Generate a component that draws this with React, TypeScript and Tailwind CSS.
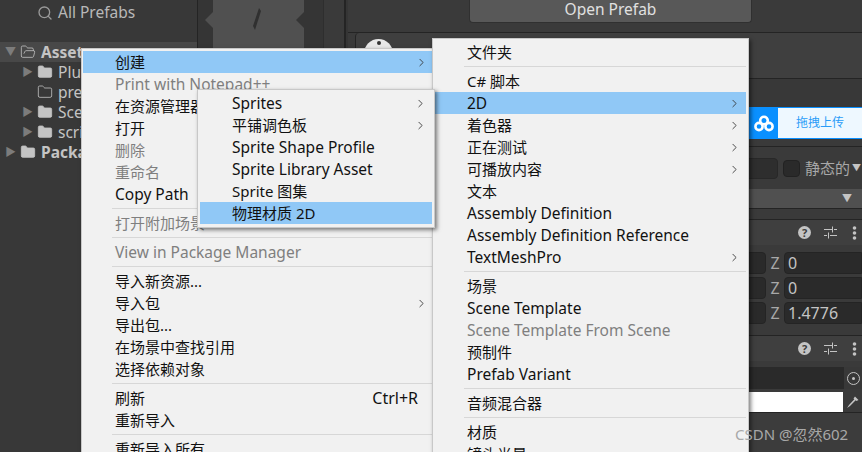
import React from "react";
import { ChevronRight, Folder, FolderOpen, Search } from "lucide-react";

const font = "font-['Noto_Sans','Noto_Sans_CJK_SC',sans-serif]";

type Item =
  | { sep: true }
  | { label: string; muted?: boolean; active?: boolean; arrow?: boolean; shortcut?: string };

const s: Item = { sep: true };

const assetsMenu: Item[] = [
  { label: "创建", active: true, arrow: true },
  { label: "Print with Notepad++", muted: true },
  { label: "在资源管理器中显示" },
  { label: "打开" },
  { label: "删除", muted: true },
  { label: "重命名", muted: true },
  { label: "Copy Path" },
  s,
  { label: "打开附加场景", muted: true },
  s,
  { label: "View in Package Manager", muted: true },
  s,
  { label: "导入新资源..." },
  { label: "导入包", arrow: true },
  { label: "导出包..." },
  { label: "在场景中查找引用" },
  { label: "选择依赖对象" },
  s,
  { label: "刷新", shortcut: "Ctrl+R" },
  { label: "重新导入" },
  s,
  { label: "重新导入所有" },
];

const spriteMenu: Item[] = [
  { label: "Sprites", arrow: true },
  { label: "平铺调色板", arrow: true },
  { label: "Sprite Shape Profile" },
  { label: "Sprite Library Asset" },
  { label: "Sprite 图集" },
  { label: "物理材质 2D", active: true },
];

const createMenu: Item[] = [
  { label: "文件夹" },
  s,
  { label: "C# 脚本" },
  { label: "2D", active: true, arrow: true },
  { label: "着色器", arrow: true },
  { label: "正在测试", arrow: true },
  { label: "可播放内容", arrow: true },
  { label: "文本" },
  { label: "Assembly Definition" },
  { label: "Assembly Definition Reference" },
  { label: "TextMeshPro", arrow: true },
  s,
  { label: "场景" },
  { label: "Scene Template" },
  { label: "Scene Template From Scene", muted: true },
  { label: "预制件" },
  { label: "Prefab Variant" },
  s,
  { label: "音频混合器" },
  s,
  { label: "材质" },
  { label: "镜头光晕" },
];

// latin labels run a little wider than the cjk ones in the reference
const isLatin = (t: string) => /^[\x20-\x7e]+$/.test(t);

const MenuList = ({ items, textPad, sepPad }: { items: Item[]; textPad: string; sepPad: string }) => (
  <div className="flex flex-col">
    {items.map((item, i) =>
      "sep" in item ? (
        <div key={i} className={`h-[7px] flex items-center ${sepPad}`}>
          <div className="h-px w-full bg-[#d7d7d7]" />
        </div>
      ) : (
        <div
          key={i}
          className={`h-[22px] shrink-0 flex items-center justify-between whitespace-nowrap leading-none ${textPad} ${
            isLatin(item.label) ? "text-[15.5px] pt-px" : "text-[15px]"
          } ${item.active ? "bg-[#90c8f6]" : ""} ${item.muted ? "text-[#7f7f7f]" : "text-[#111]"}`}
        >
          <span>{item.label}</span>
          {item.arrow && <ChevronRight size={13} strokeWidth={1.6} className="text-[#333]" />}
          {item.shortcut && <span className="text-[16px] pr-[10px]">{item.shortcut}</span>}
        </div>
      )
    )}
  </div>
);

const HeaderIcons = () => (
  <div className="flex items-center gap-[13px] text-[#c4c4c4]">
    <div className="w-[13px] h-[13px] rounded-full bg-[#c4c4c4] text-[#3c3c3c] text-[11px] font-bold leading-[13px] text-center">?</div>
    <svg width="13" height="13" viewBox="0 0 13 13" stroke="currentColor" fill="none">
      <path d="M0 3.5h8M10 3.5h3M8.5 0.5v6M0 9.5h3M6 9.5h7M4.5 6.5v6" />
    </svg>
    <svg width="5" height="14" viewBox="0 0 5 14" fill="currentColor" className="mr-[1px] ml-[2px]">
      <circle cx="2.5" cy="2" r="1.8" />
      <circle cx="2.5" cy="7" r="1.8" />
      <circle cx="2.5" cy="12" r="1.8" />
    </svg>
  </div>
);

const ZRow = ({ value }: { value: string }) => (
  <div className="h-[22px] flex items-center justify-end text-[#c4c4c4] text-[16px]">
    <div className="w-[20px] h-full bg-[#2a2a2a] border border-[#242424] rounded-r" />
    <span className="w-[18px] text-center text-[#a8a8a8]">Z</span>
    <div className="w-[78px] h-full bg-[#2a2a2a] border border-[#242424] rounded-l pl-[3px] leading-[20px]">{value}</div>
  </div>
);

const Tree = ({ label, depth, open, hollow, bold }: { label: string; depth: number; open?: boolean; hollow?: boolean; bold?: boolean }) => {
  const Icon = open ? FolderOpen : Folder;
  return (
    <div
      className={`h-[20px] flex items-center text-[15.5px] text-[#c4c4c4] ${bold ? "font-bold" : ""} ${open ? "bg-[#484848]" : ""} ${depth ? "pl-[22px]" : "pl-[5px]"}`}
    >
      <span className="w-[15px] text-[11px] text-[#7c7c7c]">{hollow ? "" : open ? "▼" : "▶"}</span>
      <Icon size={16} className="mr-[5px] text-[#c4c4c4]" fill={hollow || open ? "none" : "currentColor"} strokeWidth={1.2} />
      <span className="pt-px">{label}</span>
    </div>
  );
};

export default function App() {
  return (
    <div className={`relative w-[862px] h-[452px] overflow-hidden bg-[#383838] flex ${font}`}>
      {/* project tree */}
      <div className="w-[198px] shrink-0 border-r border-[#242424] flex flex-col">
        <div className="h-[42px] pl-[37px] pb-[17px] flex items-center gap-[5px] text-[15.5px] text-[#b8b8b8]">
          <Search size={16} className="text-[#9a9a9a]" />
          <span>All Prefabs</span>
        </div>
        <Tree label="Assets" depth={0} open bold />
        <Tree label="Plugins" depth={1} />
        <Tree label="prefabs" depth={1} hollow />
        <Tree label="Scenes" depth={1} />
        <Tree label="scripts" depth={1} />
        <Tree label="Packages" depth={0} bold />
      </div>

      {/* preview column */}
      <div className="w-[150px] shrink-0 flex bg-[#353535]">
        <div className="w-[15px] flex items-start justify-end pt-[12px]">
          <svg width="8" height="16" viewBox="0 0 8 16" fill="#505050">
            <path d="M8 0v16L0 8z" />
          </svg>
        </div>
        <div className="w-[91px] h-full bg-[#505050] flex justify-end relative">
          <svg width="38" height="30" viewBox="0 0 38 30" className="absolute left-[39px] top-[8px]" fill="#303030">
            <path d="M7 0 L1 18 L3 22 L9 3z" />
          </svg>
          <svg width="8" height="16" viewBox="0 0 8 16" fill="#353535" className="mt-[12px]">
            <path d="M0 8L8 0v16z" />
          </svg>
        </div>
        <div className="w-[19px] h-full" />
        <div className="w-px h-full bg-[#2e2e2e]" />
        <div className="w-[22px] h-full bg-[#3a3a3a] border-r-2 border-[#242424]" />
      </div>

      {/* inspector */}
      <div className="flex-1 flex flex-col min-w-0 text-[#c4c4c4] bg-[#3a3a3a]">
        <div className="h-[33px] shrink-0 pl-[121px] pr-[110px] border-b border-[#242424]">
          <div className="h-[23px] bg-[#585858] rounded-b text-[15.5px] leading-[19px] text-center text-[#e0e0e0] border border-[#303030] border-t-0">Open Prefab</div>
        </div>
        <div className="h-[46px] shrink-0 ml-[7px] rounded-tl bg-[#3f3f3f] border-l border-b border-[#242424] pl-[8px] pt-[6px]">
          <div className="w-[29px] h-[29px] rounded-full bg-[#e8e8e8] flex justify-center pt-[2px]">
            <div className="w-[4px] h-[4px] rounded-full bg-[#333]" />
          </div>
        </div>
        <div className="h-[28px] shrink-0 bg-[#383838]" />
        <div className="h-[32px] shrink-0 flex justify-end">
          <div className="w-[113px] flex bg-[#0a90ff] py-px">
            <div className="w-[29px] flex items-center justify-center">
              <svg width="20" height="17" viewBox="0 0 20 17" fill="none" stroke="#fff" strokeWidth="2.6">
                <circle cx="10" cy="5.5" r="3.8" />
                <circle cx="5" cy="11.5" r="3.6" />
                <circle cx="15" cy="11.5" r="3.6" />
              </svg>
            </div>
            <div className="flex-1 bg-[#eef8ff] text-[#2a9cf8] text-[12px] flex items-center justify-center">拖拽上传</div>
          </div>
        </div>
        <div className="h-[8px] shrink-0 border-b border-[#242424]" />
        <div className="h-[42px] shrink-0 flex items-center justify-end">
          <div className="w-[32px] h-[21px] bg-[#2e2e2e] rounded-r mr-[5px] border border-[#282828]" />
          <div className="w-[17px] h-[17px] bg-[#2a2a2a] rounded-sm border border-[#222] mr-[5px]" />
          <span className="text-[15px] text-[#a8a8a8]">静态的</span>
          <span className="text-[9px] ml-[2px] w-[10px] text-[#c4c4c4]">▼</span>
        </div>
        <div className="h-[20px] shrink-0 bg-[#505050] flex items-center justify-end pr-[10px] text-[10px] text-[#c4c4c4] border-b border-[#242424]">▼</div>
        <div className="h-[11px] shrink-0 border-b border-[#242424]" />
        <div className="h-[25px] shrink-0 bg-[#3f3f3f] flex items-center justify-end pr-[4px]">
          <HeaderIcons />
        </div>
        <div className="flex flex-col gap-[3px] pt-[7px] h-[91px] shrink-0 border-b border-[#242424]">
          <ZRow value="0" />
          <ZRow value="0" />
          <ZRow value="1.4776" />
        </div>
        <div className="h-[25px] shrink-0 bg-[#3f3f3f] flex items-center justify-end pr-[4px]">
          <HeaderIcons />
        </div>
        <div className="mt-[6px] h-[22px] shrink-0 flex justify-end bg-[#2a2a2a]">
          <div className="w-[18px] bg-[#383838] flex items-center justify-center">
            <div className="w-[13px] h-[13px] rounded-full border border-[#c4c4c4] flex items-center justify-center">
              <div className="w-[3px] h-[3px] rounded-full bg-[#c4c4c4]" />
            </div>
          </div>
        </div>
        <div className="mt-[3px] h-[20px] shrink-0 flex">
          <div className="flex-1 bg-white" />
          <div className="w-[19px] flex items-center justify-center">
            <svg width="14" height="14" viewBox="0 0 14 14" fill="#c4c4c4">
              <path d="M9 1.5l3.5 3.5-2 1-.8-.8L4 11l-3 2 2-3 5.3-5.7-.8-.8z" />
            </svg>
          </div>
        </div>
        <div className="flex-1 border-t border-[#242424] bg-[#3c3c3c]" />
      </div>

      {/* context menus */}
      <div className="absolute left-[81px] top-[48px] w-[353px] h-[420px] bg-[#f1f1f1] border border-[#c8c8c8] shadow-[2px_2px_4px_rgba(0,0,0,0.5)] pl-px pt-[2px]">
        <MenuList items={assetsMenu} textPad="pl-[32px] pr-[5px]" sepPad="pl-[29px]" />
      </div>
      <div className="absolute left-[432px] top-[38px] w-[317px] h-[440px] bg-[#f1f1f1] border border-[#c8c8c8] shadow-[2px_2px_4px_rgba(0,0,0,0.5)] pt-[2px] pr-[2px] pl-px">
        <MenuList items={createMenu} textPad="pl-[33px] pr-[5px]" sepPad="pl-[30px]" />
      </div>
      <div className="absolute left-[197px] top-[89px] w-[238px] h-[139px] bg-[#f1f1f1] border border-[#c8c8c8] shadow-[2px_2px_4px_rgba(0,0,0,0.5)] pt-[2px] pl-[2px] pr-[2px]">
        <MenuList items={spriteMenu} textPad="pl-[32px] pr-[5px]" sepPad="pl-[30px]" />
      </div>

      <div className="absolute left-[735px] top-[423px] text-[15px] text-[#a8a8a8]">CSDN @忽然602</div>
    </div>
  );
}
